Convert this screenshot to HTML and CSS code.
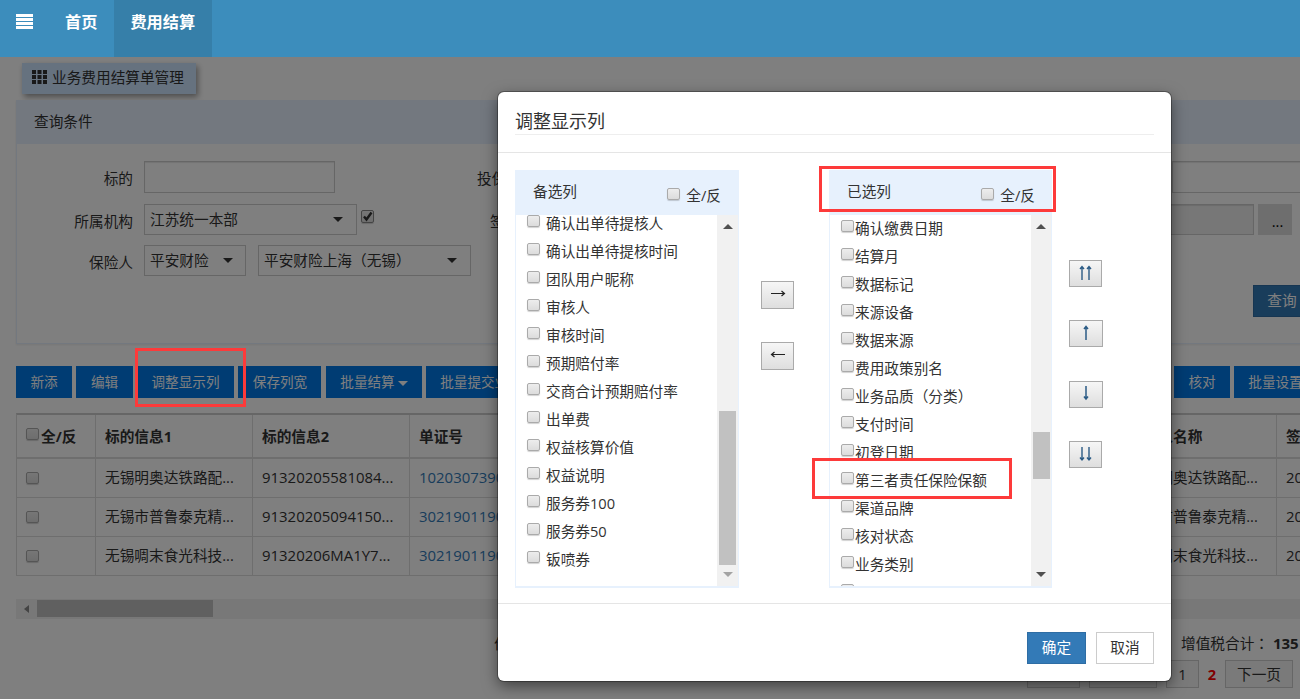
FILE: index.html
```html
<!DOCTYPE html>
<html lang="zh-CN">
<head>
<meta charset="utf-8">
<title>业务费用结算单管理</title>
<link rel="stylesheet" href="styles.css">
</head>
<body>
<nav class="topbar">
  <svg class="menu-icon" width="17" height="15" viewBox="0 0 17 15"><path fill="#fff" d="M0 0h17v3H0zM0 4h17v3H0zM0 8h17v3H0zM0 12h17v3H0z"/></svg>
  <a class="nav-item">首页</a>
  <a class="nav-item active">费用结算</a>
</nav>
<main class="page">
  <div class="tab"><svg width="15" height="15" viewBox="0 0 15 15"><path fill="#333" d="M0 0h4v4H0zM5.500 0h4v4h-4zM11 0h4v4h-4zM0 5h4v4H0zM5.500 5h4v4h-4zM11 5h4v4h-4zM0 10h4v4H0zM5.500 10h4v4h-4zM11 10h4v4h-4z"/></svg><span>业务费用结算单管理</span></div>
  <section class="query">
    <h2 class="query-title">查询条件</h2>
    <div class="query-form">
      <div class="row r1"><label class="lab">标的</label><span class="input w191"></span><label class="lab lab2">投保人</label><span class="input far"></span></div>
      <div class="row r2"><label class="lab">所属机构</label><span class="select w213">江苏统一本部<i class="caret"></i></span><span class="check dark"><svg width="13" height="13" viewBox="0 0 13 13"><path d="M3 6.500l2.500 3L10.500 2.500" fill="none" stroke="#333" stroke-width="2.400"/></svg></span><label class="lab lab3">签单</label><span class="input off"></span><span class="more">...</span></div>
      <div class="row r3"><label class="lab">保险人</label><span class="select w102">平安财险<i class="caret"></i></span><span class="select w213 s2"><span>平安财险上海<span class="mid" lang="zh-TW">（</span>无锡<span class="mid" lang="zh-TW">）</span></span><i class="caret"></i></span></div>
      <div class="query-actions"><button class="search">查询</button></div>
    </div>
  </section>
  <div class="actions">
    <button class="act a1">新添</button><button class="act a2">编辑</button><button class="act a3">调整显示列</button><button class="act a4">保存列宽</button><button class="act a5">批量结算<i class="caret small"></i></button><button class="act a6">批量提交业务</button><button class="act a7">核对</button><button class="act a8">批量设置</button>
  </div>
  <div class="table">
    <div class="tr th"><div class="td first"><i class="check"></i>全/反</div><div class="td">标的信息1</div><div class="td">标的信息2</div><div class="td">单证号</div><div class="td">投保人名称</div><div class="td">签单</div></div>
    <div class="tr"><div class="td"><i class="check"></i></div><div class="td">无锡明奥达铁路配...</div><div class="td num">91320205581084...</div><div class="td link num">1020307390</div><div class="td">无锡明奥达铁路配...</div><div class="td num">20</div></div>
    <div class="tr"><div class="td"><i class="check"></i></div><div class="td">无锡市普鲁泰克精...</div><div class="td num">91320205094150...</div><div class="td link num">3021901190</div><div class="td">无锡市普鲁泰克精...</div><div class="td num">20</div></div>
    <div class="tr"><div class="td"><i class="check"></i></div><div class="td">无锡啁末食光科技...</div><div class="td num">91320206MA1Y7...</div><div class="td link num">3021901190</div><div class="td">无锡啁末食光科技...</div><div class="td num">20</div></div>
  </div>
  <div class="hscroll"><i class="left-arrow"></i><i class="hthumb"></i></div>
  <div class="totals"><span class="sum1">价</span><span>增值税合计<span class="mid" lang="zh-TW">：</span></span><b>135</b></div>
  <div class="pager"><span class="pg p1"></span><span class="pg p2"></span><span class="pg p3">1</span><b class="current">2</b><span class="pg p4">下一页</span></div>
</main>
<div class="backdrop"></div>
<div class="modal">
  <header class="modal-head"><h1>调整显示列</h1></header>
  <div class="modal-body">
    <section class="list left">
      <div class="list-head"><span>备选列</span><label><i class="check"></i>全/反</label></div>
      <div class="list-body">
        <ul>
          <li><i class="check"></i>确认出单待提核人</li><li><i class="check"></i>确认出单待提核时间</li><li><i class="check"></i>团队用户昵称</li><li><i class="check"></i>审核人</li><li><i class="check"></i>审核时间</li><li><i class="check"></i>预期赔付率</li><li><i class="check"></i>交商合计预期赔付率</li><li><i class="check"></i>出单费</li><li><i class="check"></i>权益核算价值</li><li><i class="check"></i>权益说明</li><li><i class="check"></i>服务券100</li><li><i class="check"></i>服务券50</li><li><i class="check"></i>钣喷券</li>
        </ul>
        <div class="scroll"><i class="up"></i><i class="thumb"></i><i class="down"></i></div>
      </div>
    </section>
    <div class="movers">
      <button class="mv"><svg width="16" height="8" viewBox="0 0 16 8"><path d="M1 3.500h13M11.500 1l3 2.500L11.500 6" fill="none" stroke="#222" stroke-width="1.200"/></svg></button>
      <button class="mv"><svg width="16" height="8" viewBox="0 0 16 8"><path d="M15 3.500H2M4.500 1L1.500 3.500L4.500 6" fill="none" stroke="#222" stroke-width="1.200"/></svg></button>
    </div>
    <section class="list right">
      <div class="list-head"><span>已选列</span><label><i class="check"></i>全/反</label></div>
      <div class="list-body">
        <ul>
          <li><i class="check"></i>确认缴费日期</li><li><i class="check"></i>结算月</li><li><i class="check"></i>数据标记</li><li><i class="check"></i>来源设备</li><li><i class="check"></i>数据来源</li><li><i class="check"></i>费用政策别名</li><li><i class="check"></i>业务品质<span class="mid" lang="zh-TW">（</span>分类<span class="mid" lang="zh-TW">）</span></li><li><i class="check"></i>支付时间</li><li><i class="check"></i>初登日期</li><li><i class="check"></i>第三者责任保险保额</li><li><i class="check"></i>渠道品牌</li><li><i class="check"></i>核对状态</li><li><i class="check"></i>业务类别</li><li><i class="check"></i></li>
        </ul>
        <div class="scroll"><i class="up"></i><i class="thumb"></i><i class="down on"></i></div>
      </div>
    </section>
    <div class="orders">
      <button class="mv"><svg width="15" height="16" viewBox="0 0 15 16"><path d="M4 15V1.500M2 4L4 1.500L6 4M11 15V1.500M9 4L11 1.500L13 4" fill="none" stroke="#2b5b85" stroke-width="1.400"/></svg></button>
      <button class="mv wide"><svg width="8" height="16" viewBox="0 0 8 16"><path d="M4 15V1.500M2 4L4 1.500L6 4" fill="none" stroke="#2b5b85" stroke-width="1.500"/></svg></button>
      <button class="mv wide"><svg width="8" height="16" viewBox="0 0 8 16"><path d="M4 1v13M2 11.500L4 14L6 11.500" fill="none" stroke="#2b5b85" stroke-width="1.500"/></svg></button>
      <button class="mv"><svg width="15" height="16" viewBox="0 0 15 16"><path d="M4 1v13M2 11.500L4 14L6 11.500M11 1v13M9 11.500L11 14L13 11.500" fill="none" stroke="#2b5b85" stroke-width="1.400"/></svg></button>
    </div>
  </div>
  <footer class="modal-foot"><button class="ok">确定</button><button class="cancel">取消</button></footer>
</div>
<div class="mark m1"></div>
<div class="mark m2"></div>
<div class="mark m3"></div>
</body>
</html>
```
FILE: styles.css
```css
* { box-sizing: border-box; }
body { margin: 0; width: 1300px; height: 699px; overflow: hidden; position: relative; background: #fff; color: #333; font: 14.67px/20px "Open Sans", "Noto Sans CJK SC", sans-serif; font-weight: 400; }
button { font: inherit; margin: 0; padding: 0 0 2px; border: 0; display: flex; align-items: center; justify-content: center; flex: none; }
h1, h2, ul { margin: 0; padding: 0; font-weight: 400; list-style: none; }
i { font-style: normal; }
.mid { font-family: "Noto Sans CJK TC", sans-serif; line-height: 1; }

.topbar { height: 57px; background: #3c8dbc; display: flex; color: #fff; }
.menu-icon { margin: 14px 32px 0 16px; }
.nav-item { height: 57px; padding: 12px 16px 0 17px; font-size: 16.2px; font-weight: 700; }
.nav-item:first-of-type { padding: 12px 17px 0 0; }
.nav-item.active { background: #367fa9; padding-left: 16px; padding-right: 17px; }

.page { width: 1300px; height: 642px; overflow: hidden; white-space: nowrap; }
.tab { display: flex; gap: 5px; width: 174px; height: 31px; margin: 6px 0 0 22px; padding: 4px 0 0 10px; background: #cce4ff; box-shadow: 2px 3px 6px rgba(0,0,0,.4); }
.tab svg { margin-top: 3px; }
.query { width: 1300px; height: 244px; margin: 6px 0 0 16px; border: 1px solid #e6f1ff; box-shadow: 0 1px 2px rgba(0,0,0,.08); }
.query-title { height: 43px; padding: 10px 17px; font-size: 14.67px; background: #e6f0ff; }
.query-form { padding-top: 17px; }
.row { display: flex; height: 32px; align-items: flex-start; }
.r2 { margin-top: 11px; }
.r3 { margin-top: 9px; }
.lab { width: 116px; margin-right: 11px; padding-top: 7px; text-align: right; flex: none; }
.input, .select { height: 31px; border: 1px solid #ccc; flex: none; }
.input { height: 32px; box-shadow: inset 0 1px 1px rgba(0,0,0,.1); }
.select { display: flex; align-items: center; justify-content: space-between; padding: 0 13px 2px 5px; }
.select .caret { margin-top: 2px; }
.w191 { width: 191px; }
.w213 { width: 213px; }
.w102 { width: 102px; padding-right: 12px; }
.s2 { margin-left: 12px; }
.caret { border: 5px solid transparent; border-top-color: #333; border-bottom: 0; }
.lab2 { width: 45px; margin: 0 0 0 142px; text-align: left; }
.far { width: 160px; margin-left: 650px; }
.lab3 { width: 30px; margin: 0 0 0 116px; text-align: left; }
.off { width: 120px; height: 31px; margin-left: 614px; background: #eee; }
.more { width: 34px; height: 31px; margin-left: 4px; padding: 7px 0 0 5px; background: #ddd; text-align: center; color: #000; }
.check { display: inline-block; width: 13px; height: 12px; flex: none; border: 1px solid #aaa; border-radius: 2px; background: linear-gradient(#ededed, #dcdcdc); box-shadow: 0 1px 1px rgba(0,0,0,.18); }
.check.dark { width: 13px; height: 13px; margin: 6px 0 0 4px; border-color: #888; }
.check.dark svg { display: block; margin: -1px; }
.query-actions { margin: 8px 0 0 1236px; }
.search { width: 72px; height: 32px; padding-right: 14px; background: #337ab7; border: 1px solid #2e6da4; color: #fff; }

.actions { display: flex; gap: 4px; height: 32px; margin: 22px 0 0 16px; }
.act { height: 32px; padding-bottom: 1px; background: #0078e7; color: #fff; font-size: 13.6px; }
.a1 { width: 56px; } .a2 { width: 57px; } .a3 { width: 97px; } .a4 { width: 83px; padding-left: 1px; }
.a5 { width: 96px; margin-left: 1px; } .a6 { width: 112px; padding-right: 2px; } .a7 { width: 56px; margin-left: 632px; } .a8 { width: 83px; }
.small { margin: 4px 0 0 3px; border-width: 5px; border-top: 5px solid #fff; border-bottom: 0; }

.table { width: 1500px; margin: 15px 0 0 16px; border-top: 2px solid #ccc; border-left: 1px solid #ddd; }
.tr { display: grid; grid-template-columns: 79px 157px 157px 710px 157px 240px; height: 39px; border-bottom: 1px solid #ddd; }
.td { display: flex; align-items: center; padding: 0 0 2px 9px; border-right: 1px solid #ddd; overflow: hidden; }
.td > .check { position: relative; top: 1px; }
.th { height: 44px; border-bottom-width: 2px; font-weight: 700; }
.th .td { padding-top: 2px; }
.th .check { margin: 0 2px 6px 0; }
.num { font-size: 14.95px; }
.link { color: #337ab7; }
.hscroll { display: flex; height: 20px; margin: 23px 0 0 16px; padding: 1px 0 2px 8px; background: #f1f1f1; align-items: center; }
.left-arrow { border: 4px solid transparent; border-right: 5px solid #888; border-left: 0; margin-right: 8px; }
.hthumb { width: 176px; height: 17px; background: #c1c1c1; }
.totals { display: flex; height: 41px; padding: 14px 0 0 494px; }
.sum1 { width: 687px; }
.totals b { margin-left: 4px; font-size: 15px; }
.pager { display: flex; height: 28px; padding-left: 1027px; }
.pg { height: 28px; border: 1px solid #ccc; background: #f4f4f4; text-align: center; padding-top: 3px; flex: none; }
.p1 { width: 53px; } .p2 { width: 68px; margin-left: 9px; } .p3 { width: 33px; margin-left: 9px; } .p4 { width: 68px; }
.current { width: 26px; text-align: center; color: #f00; padding-top: 4px; }

.backdrop { position: absolute; left: 0; top: 57px; width: 1300px; height: 642px; background: rgba(0,0,0,.5); }
.modal { position: absolute; left: 498px; top: 92px; width: 673px; height: 589px; overflow: hidden; background: #fff; border-radius: 6px; box-shadow: 0 0 0 1px rgba(0,0,0,.3), 0 5px 15px rgba(0,0,0,.5); white-space: nowrap; }
.modal-head { height: 61px; padding: 17px 17px 0; border-bottom: 1px solid #e5e5e5; }
.modal-head h1 { height: 26px; font-size: 18px; line-height: 24px; border-bottom: 1px solid #eee; }
.modal-body { display: flex; height: 450px; padding: 17px 0 0 17px; }
.list { height: 418px; border: 1px solid #e7f1fd; border-bottom-width: 2px; flex: none; }
.left { width: 224px; }
.right { width: 223px; margin-left: 35px; }
.list-head { display: flex; justify-content: space-between; height: 44px; padding: 10px 17px 0; background: #e7f1fd; }
.list-head label { padding-top: 4px; }
.list-head .check { margin-right: 6px; position: relative; top: -1px; }
.right .list-head { padding-right: 16px; }
.list-body { display: flex; justify-content: space-between; height: 371px; overflow: hidden; }
.left ul { margin-top: -6px; padding-left: 11px; }
.right ul { margin-top: -1px; padding-left: 11px; }
.list li { display: flex; align-items: center; height: 28px; }
.left li .check { margin: 0 6px 4px 0; }
.right li .check { margin: 0 1px 4px 0; }
.scroll { width: 21px; height: 371px; background: #f1f1f1; padding-top: 9px; display: flex; flex-direction: column; align-items: center; flex: none; }
.right .scroll { width: 20px; }
.up { border: 5px solid transparent; border-bottom-color: #505050; border-top: 0; }
.down { border: 5px solid transparent; border-top-color: #a3a3a3; border-bottom: 0; }
.down.on { border-top-color: #505050; }
.thumb { width: 17px; background: #c1c1c1; }
.left .thumb { height: 154px; margin: 182px 0 7px; }
.right .thumb { height: 47px; margin: 203px 0 93px; }
.mv { width: 33px; height: 28px; border: 1px solid #aaa; background: linear-gradient(#f6f6f6, #dedede); }
.wide { width: 34px; }
.movers { margin-left: 22px; padding-top: 111px; display: flex; flex-direction: column; gap: 33px; }
.orders { margin-left: 17px; padding-top: 90px; display: flex; flex-direction: column; gap: 33.4px; }
.orders .mv { height: 27px; }
.modal-foot { display: flex; justify-content: flex-end; gap: 10px; height: 78px; padding: 28px 17px 0 0; border-top: 1px solid #e5e5e5; }
.ok { width: 59px; height: 32px; background: #337ab7; border: 1px solid #2e6da4; color: #fff; }
.cancel { width: 58px; height: 32px; background: #fff; border: 1px solid #ccc; color: #333; }

.mark { position: absolute; border: 3px solid #fd3a3a; }
.m1 { left: 135px; top: 348px; width: 111px; height: 59px; }
.m2 { left: 819px; top: 166px; width: 237px; height: 46px; }
.m3 { left: 812px; top: 458px; width: 200px; height: 41px; }
```
